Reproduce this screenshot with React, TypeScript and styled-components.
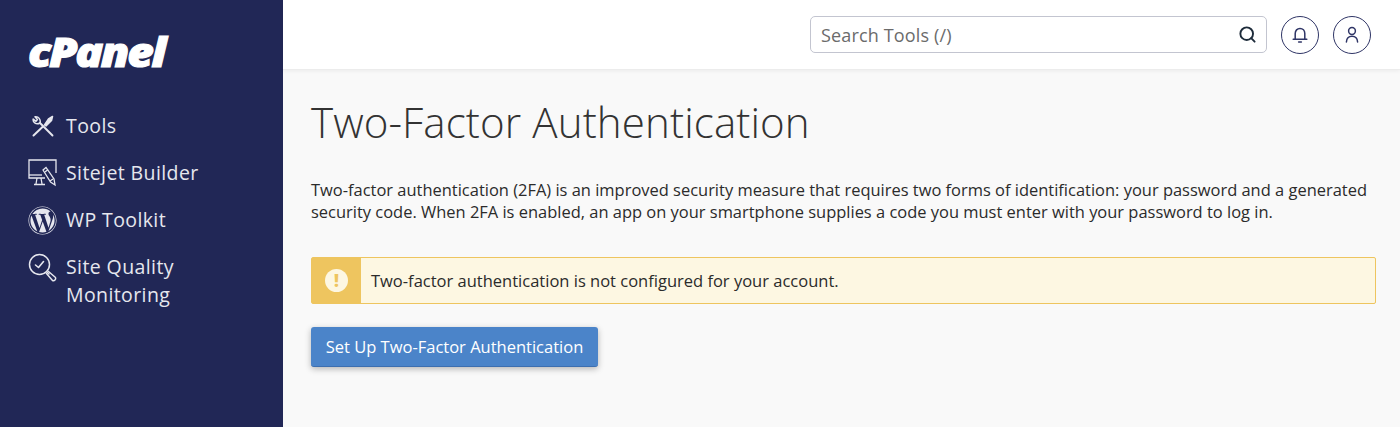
import React, { FC } from 'react';
import styled, { createGlobalStyle } from 'styled-components';
import { Search } from 'lucide-react';
import { FaWordpress } from 'react-icons/fa';

const GlobalStyle = createGlobalStyle`
  html, body {
    margin: 0;
    height: 100%;
    overflow: hidden;
  }

  body {
    font-family: "Open Sans", "Liberation Sans", sans-serif;
    color: #2b2b2b;
    background: #f9f9f9;
  }
`;

const Page = styled.div`
  display: flex;
  width: 1400px;
  height: 427px;
`;

const Sidebar = styled.nav`
  flex: 0 0 283px;
  background-color: #212756;
  color: #e6e7ee;
  padding: 29px 0 0 28px;
  box-sizing: border-box;
`;

const Logo = styled.div`
  height: 46px;
  margin-bottom: 37px;
  color: #fff;
  font-size: 40px;
  line-height: 46px;
  font-weight: 800;
  font-style: italic;
  letter-spacing: -2px;
  -webkit-text-stroke: 1.1px #fff;
  transform: scaleX(1.15);
  transform-origin: left center;
`;

const NavList = styled.ul`
  list-style: none;
  margin: 0;
  padding: 0;
  display: flex;
  flex-direction: column;
  gap: 19px;
`;

const NavItem = styled.li`
  display: flex;
  align-items: flex-start;
  gap: 9px;
  font-size: 19.5px;
  line-height: 28px;
  letter-spacing: 0.4px;
`;

const NavIcon = styled.span`
  flex: 0 0 29px;
  height: 28px;
  display: flex;
  align-items: center;
  justify-content: center;
`;

const Main = styled.div`
  flex: 1;
  min-width: 0;
  display: flex;
  flex-direction: column;
`;

const Header = styled.header`
  height: 70px;
  flex: 0 0 70px;
  background: #fff;
  border-bottom: 1px solid #ececec;
  box-shadow: 0 1px 4px rgba(0, 0, 0, 0.06);
  box-sizing: border-box;
  display: flex;
  align-items: center;
  justify-content: flex-end;
  gap: 14px;
  padding: 0 29px 0 0;
`;

const SearchBox = styled.div`
  width: 457px;
  height: 37px;
  box-sizing: border-box;
  border: 1.5px solid #c3c5d0;
  border-radius: 5px;
  display: flex;
  align-items: center;
  justify-content: space-between;
  padding: 0 9px 0 10px;
  background: #fff;
  color: #6b6b6b;
  font-size: 18px;
  letter-spacing: 0.15px;
`;

const RoundButton = styled.button`
  width: 38px;
  height: 38px;
  padding: 0;
  border: 1.5px solid #2f3566;
  border-radius: 50%;
  background: #fff;
  color: #2f3566;
  display: flex;
  align-items: center;
  justify-content: center;
`;

const Content = styled.main`
  flex: 1;
  padding: 21px 24px 0 28px;
`;

const Title = styled.h1`
  margin: 0 0 26px;
  font-size: 42.1px;
  line-height: 62px;
  font-weight: 300;
  color: #333;
  letter-spacing: 0.1px;
`;

const Intro = styled.p`
  margin: 0 0 34px;
  font-size: 16.47px;
  line-height: 22px;
  color: #2b2b2b;
`;

const Alert = styled.div`
  height: 47px;
  box-sizing: border-box;
  display: flex;
  align-items: stretch;
  border: 1px solid #eec55f;
  border-radius: 2px;
  background: #fdf7e2;
  font-size: 16.5px;
  margin-bottom: 23px;
`;

const AlertIcon = styled.div`
  flex: 0 0 49px;
  background: #eec55f;
  display: flex;
  align-items: center;
  justify-content: center;
`;

const AlertMark = styled.span`
  width: 23px;
  height: 23px;
  border-radius: 50%;
  background: #fdf7e2;
  color: #eec55f;
  font-size: 17px;
  font-weight: 800;
  line-height: 23px;
  text-align: center;
`;

const AlertText = styled.div`
  display: flex;
  align-items: center;
  padding-left: 10px;
`;

const PrimaryButton = styled.button`
  display: block;
  width: 287px;
  height: 40px;
  padding: 0;
  border: none;
  border-bottom: 1px solid #3d6fb0;
  border-radius: 3px;
  background: #4b84c9;
  color: #fff;
  font-family: inherit;
  font-size: 16.5px;
  box-shadow: 0 2px 6px rgba(0, 0, 0, 0.28);
`;

const ToolsIcon: FC = () => (
  <svg width="22" height="22" viewBox="0 0 22 22" fill="none" stroke="currentColor" strokeWidth="1.5" strokeLinecap="round" strokeLinejoin="round">
    <path d="M1.5 20.5 L11 11.5" strokeWidth="2" />
    <path d="M12.5 10 L16.5 4 L20.5 1.5 L19.5 5.5 L14 11 Z" fill="currentColor" />
    <path d="M20.5 20.5 L8 8" strokeWidth="1.9" />
    <path d="M8 8 C9 4.5 6.5 1.2 3 1.8 L5.4 4.6 L4 6.4 L1.2 4 C0.6 7.8 4.4 10 8 8 Z" />
  </svg>
);

const SitejetIcon: FC = () => (
  <svg width="29" height="28" viewBox="0 0 29 28" fill="none" stroke="currentColor" strokeWidth="1.3">
    <path d="M28 14 V1 H1 V19 H17" />
    <path d="M1 16 H14" />
    <path d="M9 19 L8 25 M13 19 L14 25 M6 25.5 H17" />
    <path d="M15 11 L18 8.5 L26 20 L27 26 L22.5 23 Z" />
    <path d="M17 13 L20 10.5 M22 22 L25 20" />
  </svg>
);

const QualityIcon: FC = () => (
  <svg width="29" height="29" viewBox="0 0 29 29" fill="none" stroke="currentColor" strokeWidth="1.5" strokeLinecap="round" strokeLinejoin="round">
    <circle cx="11.5" cy="11.5" r="10" />
    <path d="M7.5 12 L10.5 14.5 L15.5 8.5" strokeWidth="1.6" />
    <path d="M19 19 L21 21" />
    <path d="M20.5 18.5 L27.5 24.5 A2.3 2.3 0 0 1 24.5 27.5 L18.5 20.5" />
  </svg>
);

const BellIcon: FC = () => (
  <svg width="18" height="18" viewBox="0 0 18 18" fill="none" stroke="currentColor" strokeWidth="1.5" strokeLinecap="round" strokeLinejoin="round">
    <path d="M4.2 13 V7.6 C4.2 4.6 6.2 2.4 9 2.4 C11.8 2.4 13.8 4.6 13.8 7.6 V13" />
    <path d="M2.2 13.2 H15.8" />
    <path d="M7.6 16 H10.4" />
  </svg>
);

const UserIcon: FC = () => (
  <svg width="18" height="18" viewBox="0 0 18 18" fill="none" stroke="currentColor" strokeWidth="1.5" strokeLinecap="round">
    <circle cx="9" cy="5" r="3.4" />
    <path d="M3.4 16 C3.6 12.2 5.8 10.2 9 10.2 C12.2 10.2 14.4 12.2 14.6 16" />
  </svg>
);

const WpIcon = styled(FaWordpress)`
  width: 29px;
  height: 29px;
`;

const navItems = [
  { label: 'Tools', icon: <ToolsIcon /> },
  { label: 'Sitejet Builder', icon: <SitejetIcon /> },
  { label: 'WP Toolkit', icon: <WpIcon /> },
  { label: 'Site Quality Monitoring', icon: <QualityIcon /> },
];

const App: FC = () => {
  return (
    <Page>
      <GlobalStyle />
      <Sidebar>
        <Logo>cPanel</Logo>
        <NavList>
          {navItems.map((item) => (
            <NavItem key={item.label}>
              <NavIcon>{item.icon}</NavIcon>
              <span>{item.label}</span>
            </NavItem>
          ))}
        </NavList>
      </Sidebar>
      <Main>
        <Header>
          <SearchBox>
            <span>Search Tools (/)</span>
            <Search size={19} color="#1d2b3a" strokeWidth={2.4} />
          </SearchBox>
          <RoundButton aria-label="Notifications">
            <BellIcon />
          </RoundButton>
          <RoundButton aria-label="Account">
            <UserIcon />
          </RoundButton>
        </Header>
        <Content>
          <Title>Two-Factor Authentication</Title>
          <Intro>
            Two-factor authentication (2FA) is an improved security measure that requires two forms of identification: your password and a generated security code. When 2FA is enabled, an app on your smartphone supplies a code you must enter with your password to log in.
          </Intro>
          <Alert>
            <AlertIcon>
              <AlertMark>!</AlertMark>
            </AlertIcon>
            <AlertText>Two-factor authentication is not configured for your account.</AlertText>
          </Alert>
          <PrimaryButton>Set Up Two-Factor Authentication</PrimaryButton>
        </Content>
      </Main>
    </Page>
  );
};

export default App;
